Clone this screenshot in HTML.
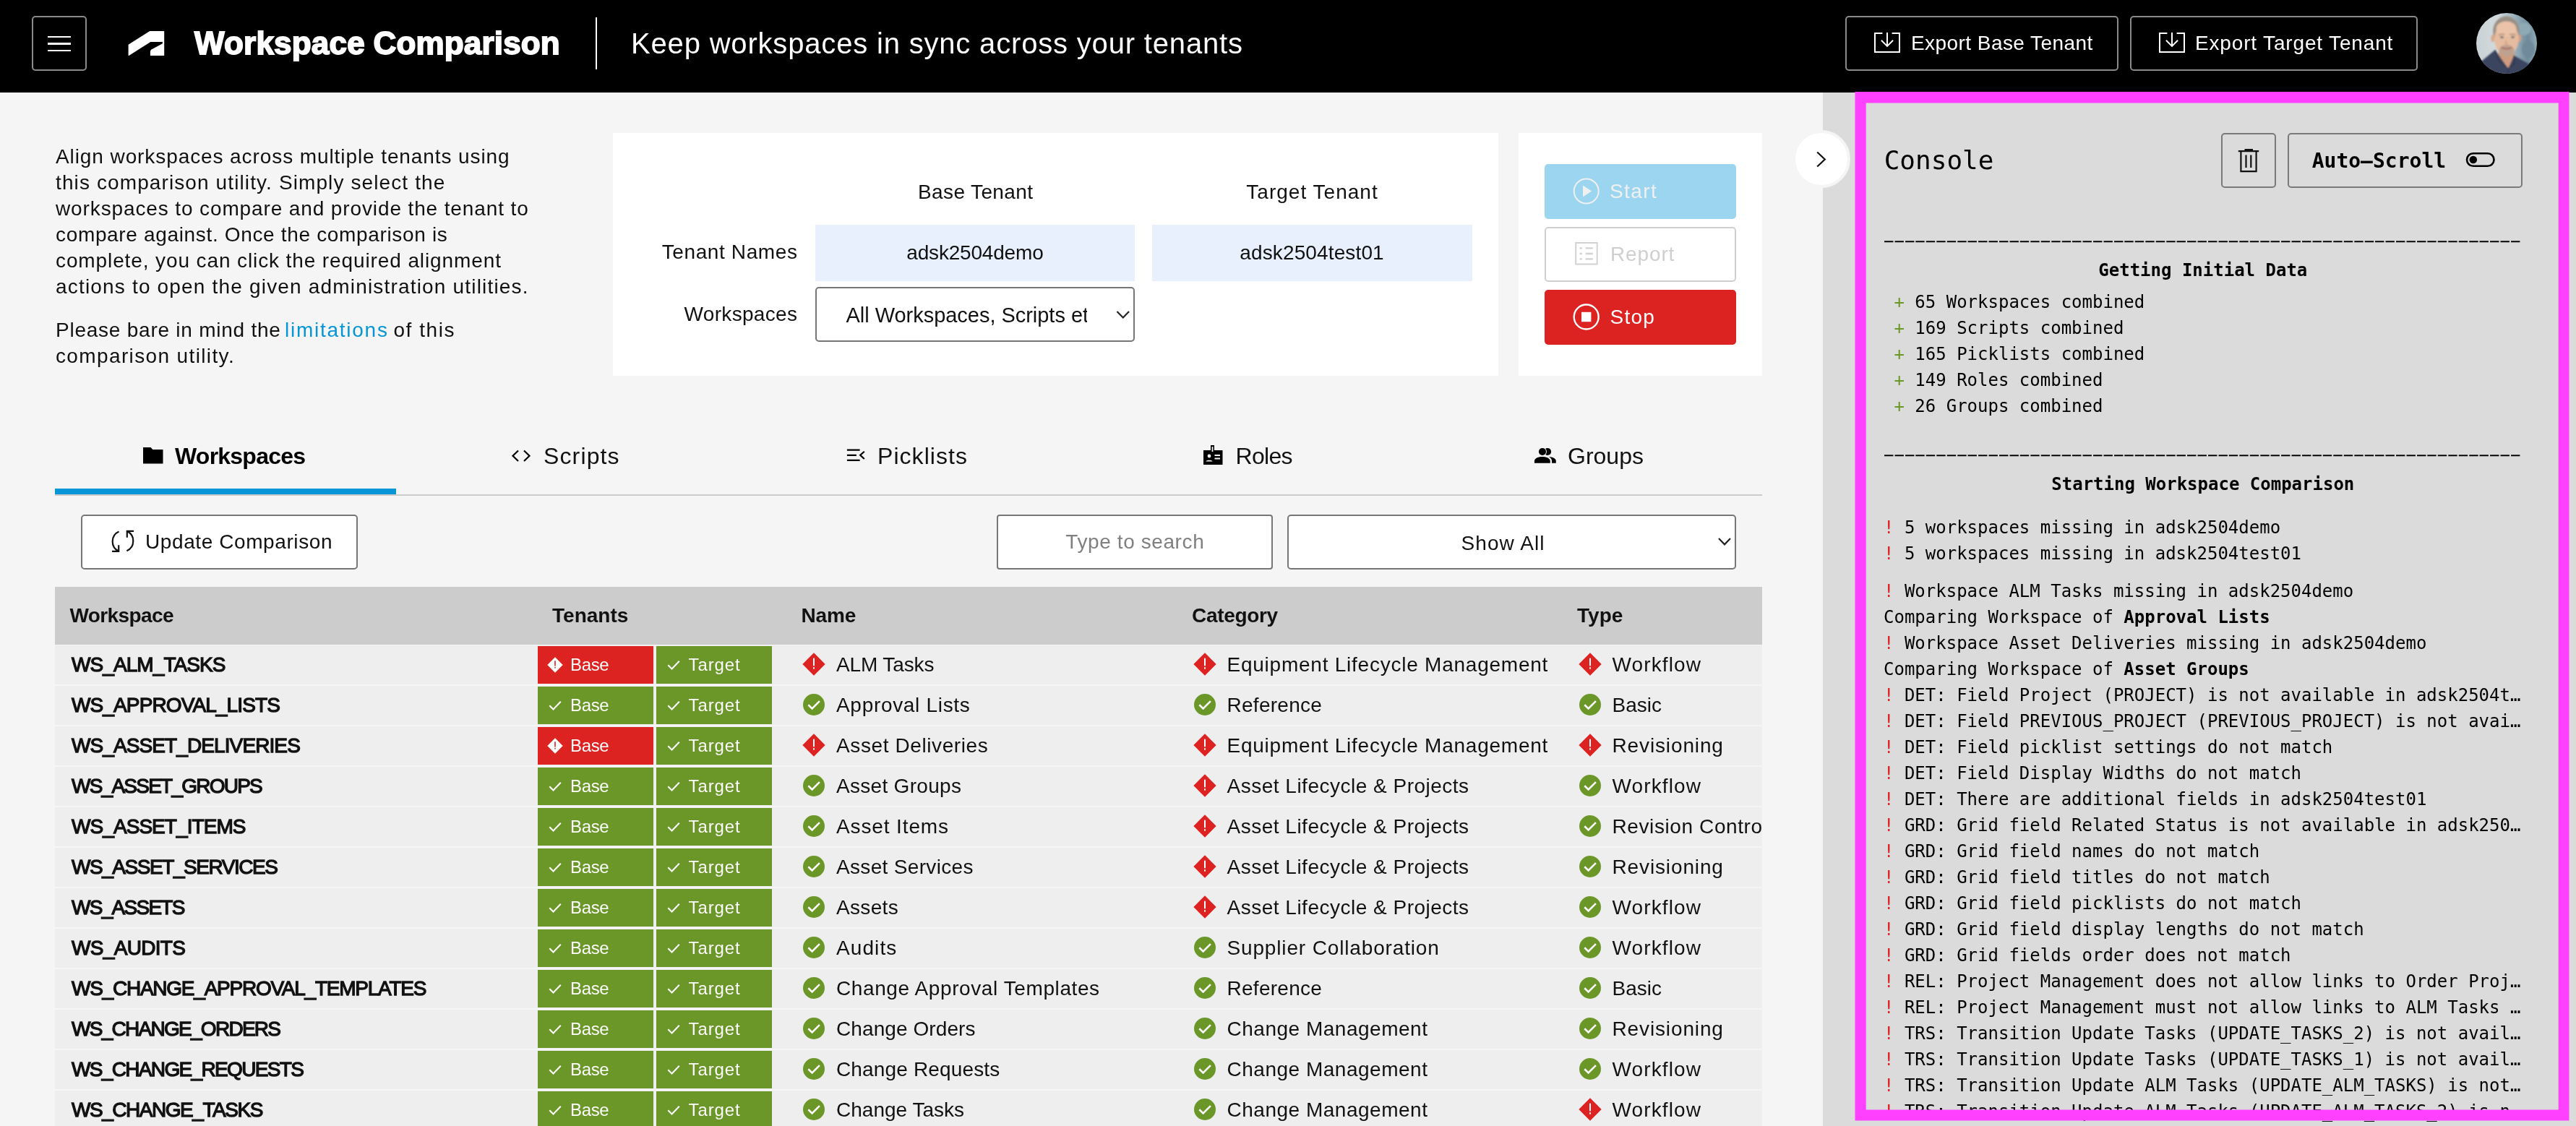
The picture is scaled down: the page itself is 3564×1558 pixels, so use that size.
<!DOCTYPE html>
<html lang="en"><head><meta charset="utf-8"><title>Workspace Comparison</title>
<style>
html,body{margin:0;padding:0;}
body{width:3564px;height:1558px;overflow:hidden;background:#f5f5f5;font-family:"Liberation Sans", sans-serif;position:relative;will-change:transform;}
.b{position:absolute;box-sizing:border-box;display:block;}
.t{position:absolute;white-space:pre;letter-spacing:0.6px;}
.m{font-family:"DejaVu Sans Mono", "Liberation Mono", monospace;letter-spacing:0;}
</style></head><body>
<div class="b" style="left:0px;top:0px;width:3564px;height:128px;background:#000;"></div>
<div class="b" style="left:44px;top:22px;width:76px;height:76px;border:2px solid #8a8a8a;border-radius:5px;"></div>
<div class="b" style="left:66px;top:49.5px;width:32px;height:2.5px;background:#fff;"></div>
<div class="b" style="left:66px;top:59px;width:32px;height:2.5px;background:#fff;"></div>
<div class="b" style="left:66px;top:68.5px;width:32px;height:2.5px;background:#fff;"></div>
<svg class="b" style="left:170px;top:36px;" width="64" height="48" viewBox="0 0 64 48"><polygon fill="#fff" points="7.6,25.7 37.2,6.9 57.2,6.9 57.2,40.9 37.9,40.9 37.9,35.1 39,32.7 54.9,24.3 54.9,22 38.3,22 8.3,40.9 7.6,40.9"/></svg>
<div class="t" style="left:269px;top:31.25px;font-size:44px;line-height:57px;color:#fff;font-weight:bold;letter-spacing:0.22px;-webkit-text-stroke:1.8px #fff;">Workspace</div>
<div class="t" style="left:516.5px;top:31.25px;font-size:44px;line-height:57px;color:#fff;font-weight:bold;letter-spacing:0.17px;-webkit-text-stroke:1.8px #fff;">Comparison</div>
<div class="b" style="left:823.5px;top:24px;width:2px;height:72px;background:#fff;"></div>
<div class="t" style="left:873px;top:34.14px;font-size:40px;line-height:52px;color:#fff;letter-spacing:0.82px;">Keep workspaces in sync across your tenants</div>
<div class="b" style="left:2553px;top:22px;width:378px;height:76px;border:2px solid #8a8a8a;border-radius:5px;"></div>
<svg class="b" style="left:2592px;top:44px;" width="38" height="30" viewBox="0 0 38 30"><path d="M12.4 2H2v26h34V2H25.6" fill="none" stroke="#fff" stroke-width="2"/><path d="M19 1v18.5M10.9 11.8l8.1 8.1 8.1-8.1" fill="none" stroke="#fff" stroke-width="2"/></svg>
<div class="t" style="left:2644px;top:42.30px;font-size:28px;line-height:36px;color:#fff;letter-spacing:0.44px;">Export Base Tenant</div>
<div class="b" style="left:2947px;top:22px;width:398px;height:76px;border:2px solid #8a8a8a;border-radius:5px;"></div>
<svg class="b" style="left:2986px;top:44px;" width="38" height="30" viewBox="0 0 38 30"><path d="M12.4 2H2v26h34V2H25.6" fill="none" stroke="#fff" stroke-width="2"/><path d="M19 1v18.5M10.9 11.8l8.1 8.1 8.1-8.1" fill="none" stroke="#fff" stroke-width="2"/></svg>
<div class="t" style="left:3037px;top:42.30px;font-size:28px;line-height:36px;color:#fff;letter-spacing:0.84px;">Export Target Tenant</div>
<svg class="b" style="left:3426px;top:18px;" width="84" height="84" viewBox="0 0 84 84"><defs><clipPath id="avc"><circle cx="42" cy="42" r="42"/></clipPath><linearGradient id="avg" x1="0" x2="1" y1="0" y2="0"><stop offset="0" stop-color="#c9d2d6"/><stop offset=".35" stop-color="#d3dadd"/><stop offset=".62" stop-color="#9db3bd"/><stop offset=".85" stop-color="#6f8b9c"/><stop offset="1" stop-color="#94abb6"/></linearGradient><filter id="avb" x="-10%" y="-10%" width="120%" height="120%"><feGaussianBlur stdDeviation="1.1"/></filter></defs><g clip-path="url(#avc)"><rect width="84" height="84" fill="url(#avg)"/><g filter="url(#avb)"><ellipse cx="72" cy="50" rx="9" ry="12" fill="#6f8a9b"/><ellipse cx="66" cy="22" rx="10" ry="9" fill="#8eaab4"/><ellipse cx="41.500" cy="25" rx="18.300" ry="20.500" fill="#9a8f86"/><ellipse cx="23" cy="35" rx="2.600" ry="5" fill="#d9a88c"/><ellipse cx="60" cy="35" rx="2.600" ry="5" fill="#d19f84"/><path d="M34 50h17l3 12-10 18-16-20z" fill="#cf9c80"/><ellipse cx="42" cy="36" rx="16.800" ry="22.500" fill="#e6bca0"/><ellipse cx="41.500" cy="22" rx="14" ry="10.500" fill="#eac3a8"/><ellipse cx="42" cy="52" rx="10.500" ry="8" fill="#bfa190"/><path d="M34.500 47.500q7.500 5.500 15 0q-7.500 3-15 0z" fill="#f2e6e0" stroke="#a8675c" stroke-width="1.200"/><ellipse cx="35.500" cy="33.500" rx="2.600" ry="1.300" fill="#5d6068"/><ellipse cx="50.500" cy="33.500" rx="2.600" ry="1.300" fill="#5d6068"/><path d="M31 30.500q4.500-2 8.500-.5M46 30q4-1.500 8.500.5" stroke="#9a7f6c" stroke-width="1.300" fill="none"/><path d="M41 36l-2.500 8.500h6z" fill="#dba98d"/><path d="M-2 74L7.800 66.300 26.100 51.100 44.200 76.900 52.200 58.800 73 70.500 90 86H-2z" fill="#3a4560"/><path d="M26.100 51.100L31 66 44.200 76.900M52.200 58.800L53 70 44.200 76.900V86" stroke="#2b3349" stroke-width="1.200" fill="none"/></g></g></svg>
<div class="t" style="left:77px;top:199.30px;font-size:28px;line-height:36px;color:#111;letter-spacing:0.91px;">Align workspaces across multiple tenants using</div>
<div class="t" style="left:77px;top:235.30px;font-size:28px;line-height:36px;color:#111;letter-spacing:1.11px;">this comparison utility. Simply select the</div>
<div class="t" style="left:77px;top:271.30px;font-size:28px;line-height:36px;color:#111;letter-spacing:0.88px;">workspaces to compare and provide the tenant to</div>
<div class="t" style="left:77px;top:307.30px;font-size:28px;line-height:36px;color:#111;letter-spacing:0.66px;">compare against. Once the comparison is</div>
<div class="t" style="left:77px;top:343.30px;font-size:28px;line-height:36px;color:#111;letter-spacing:0.89px;">complete, you can click the required alignment</div>
<div class="t" style="left:77px;top:379.30px;font-size:28px;line-height:36px;color:#111;letter-spacing:1.18px;">actions to open the given administration utilities.</div>
<div class="t" style="left:77px;top:439.30px;font-size:28px;line-height:36px;color:#111;letter-spacing:0.76px;">Please bare in mind the</div>
<div class="t" style="left:394px;top:439.30px;font-size:28px;line-height:36px;color:#0696d7;letter-spacing:1.74px;">limitations</div>
<div class="t" style="left:544.5px;top:439.30px;font-size:28px;line-height:36px;color:#111;letter-spacing:1.53px;">of this</div>
<div class="t" style="left:77px;top:475.30px;font-size:28px;line-height:36px;color:#111;letter-spacing:1.37px;">comparison utility.</div>
<div class="b" style="left:848px;top:184px;width:1225px;height:336px;background:#fff;"></div>
<div class="t" style="left:1349.5px;top:248.30px;font-size:28px;line-height:36px;color:#111;letter-spacing:0.37px;transform:translateX(-50%);margin-left:0.19px;">Base Tenant</div>
<div class="t" style="left:1815px;top:248.30px;font-size:28px;line-height:36px;color:#111;letter-spacing:1.02px;transform:translateX(-50%);margin-left:0.51px;">Target Tenant</div>
<div class="t" style="left:1103px;top:331.30px;font-size:28px;line-height:36px;color:#111;letter-spacing:0.62px;transform:translateX(-100%);margin-left:0.62px;">Tenant Names</div>
<div class="t" style="left:1103px;top:417.30px;font-size:28px;line-height:36px;color:#111;letter-spacing:0.32px;transform:translateX(-100%);margin-left:0.32px;">Workspaces</div>
<div class="b" style="left:1128px;top:311px;width:442px;height:78px;background:#e8f0fe;"></div>
<div class="b" style="left:1594px;top:311px;width:443px;height:78px;background:#e8f0fe;"></div>
<div class="t" style="left:1349px;top:332.30px;font-size:28px;line-height:36px;color:#111;letter-spacing:-0.19px;transform:translateX(-50%);margin-left:-0.09px;">adsk2504demo</div>
<div class="t" style="left:1815px;top:332.30px;font-size:28px;line-height:36px;color:#111;letter-spacing:0.13px;transform:translateX(-50%);margin-left:0.06px;">adsk2504test01</div>
<div class="b" style="left:1128px;top:397px;width:442px;height:76px;background:#fff;border:2px solid #767676;border-radius:5px;"></div>
<div class="b" style="left:1160px;top:400px;width:344px;height:70px;overflow:hidden;">
<div class="t" style="left:10.5px;top:16.55px;font-size:29px;line-height:38px;color:#111;letter-spacing:-0.03px;">All Workspaces, Scripts etc.</div>
</div>
<svg class="b" style="left:1542px;top:426px;" width="24" height="18" viewBox="0 0 24 18"><path d="M3.5 5l8.3 8.5L20 5" fill="none" stroke="#222" stroke-width="2.2"/></svg>
<div class="b" style="left:2101px;top:184px;width:337px;height:336px;background:#fff;"></div>
<div class="b" style="left:2137px;top:227px;width:265px;height:76px;background:#9bd5ef;border-radius:5px;"></div>
<svg class="b" style="left:2175px;top:245px;" width="40" height="40" viewBox="0 0 40 40"><circle cx="19.7" cy="19.5" r="17" fill="none" stroke="#f0f0f0" stroke-width="2"/><path d="M15 11.5v16l12-8z" fill="#f0f0f0"/></svg>
<div class="t" style="left:2227px;top:247.30px;font-size:28px;line-height:36px;color:#f0f0f0;letter-spacing:1.44px;">Start</div>
<div class="b" style="left:2137px;top:314px;width:265px;height:76px;background:#fff;border:2px solid #cfcfcf;border-radius:5px;"></div>
<svg class="b" style="left:2177px;top:334px;" width="36" height="36" viewBox="0 0 36 36"><rect x="3.200" y="2" width="29.500" height="29.500" fill="none" stroke="#d2d2d2" stroke-width="2"/><path d="M8.600 9.400h3.200M8.600 17h3.200M8.600 24.400h3.200M16.600 9.400h10.200M16.600 17h10.200M16.600 24.400h10.200" stroke="#d2d2d2" stroke-width="2.400" fill="none"/></svg>
<div class="t" style="left:2228px;top:334.30px;font-size:28px;line-height:36px;color:#cfcfcf;letter-spacing:0.87px;">Report</div>
<div class="b" style="left:2137px;top:401px;width:265px;height:76px;background:#dd2222;border-radius:5px;"></div>
<svg class="b" style="left:2175px;top:419px;" width="40" height="40" viewBox="0 0 40 40"><circle cx="19.7" cy="19.5" r="17" fill="none" stroke="#fff" stroke-width="2.4"/><rect x="13" y="12.8" width="13.4" height="13.4" fill="#fff"/></svg>
<div class="t" style="left:2227.5px;top:421.30px;font-size:28px;line-height:36px;color:#fff;letter-spacing:1.26px;">Stop</div>
<div class="b" style="left:76px;top:683.5px;width:2362px;height:2px;background:#cbcbcb;"></div>
<div class="b" style="left:76px;top:676px;width:472px;height:8px;background:#0696d7;"></div>
<svg class="b" style="left:196px;top:617px;" width="32" height="26" viewBox="0 0 32 26"><path d="M2 2h10.5l2.8 3H29.5v19.5H2z" fill="#000"/></svg>
<div class="t" style="left:242px;top:609.91px;font-size:32px;line-height:42px;color:#000;font-weight:bold;letter-spacing:-0.77px;">Workspaces</div>
<svg class="b" style="left:706px;top:620px;" width="32" height="22" viewBox="0 0 32 22"><path d="M11 3.5L3.5 10.7 11 18M19 3.5l7.5 7.2L19 18" fill="none" stroke="#000" stroke-width="2.2"/></svg>
<div class="t" style="left:752px;top:609.91px;font-size:32px;line-height:42px;color:#111;letter-spacing:1.13px;">Scripts</div>
<svg class="b" style="left:1168px;top:618px;" width="32" height="24" viewBox="0 0 32 24"><path d="M3.9 4.7h17.7M3.9 11.8h13M3.9 18.8h17.7M27.8 6.8l-5.6 5 5.6 5.2" fill="none" stroke="#000" stroke-width="2.2"/></svg>
<div class="t" style="left:1214px;top:609.91px;font-size:32px;line-height:42px;color:#111;letter-spacing:1.05px;">Picklists</div>
<svg class="b" style="left:1662.7px;top:614.3px;" width="32" height="30" viewBox="0 0 32 30"><path d="M12 2h5v7h11.5v20H2V9h10z" fill="#000"/><rect x="13.6" y="4" width="1.8" height="7" fill="#f5f5f5"/><circle cx="10" cy="17" r="2.4" fill="#f5f5f5"/><path d="M5.5 24.5c0-2.5 9-2.5 9 0z" fill="#f5f5f5"/><path d="M17.5 16h7.5M17.5 20.5h7.5" stroke="#f5f5f5" stroke-width="1.8"/></svg>
<div class="t" style="left:1709.5px;top:609.91px;font-size:32px;line-height:42px;color:#111;letter-spacing:-0.68px;">Roles</div>
<svg class="b" style="left:2121px;top:618px;" width="34" height="26" viewBox="0 0 34 26"><circle cx="20.100" cy="6.920" r="5.030" fill="#000"/><circle cx="12.970" cy="6.920" r="6" fill="#f5f5f5"/><circle cx="12.970" cy="6.920" r="5.030" fill="#000"/><path d="M1.930 22.640V19.800C1.930 15.500 8 13.900 12.800 13.900S23.730 15.500 23.730 19.800V22.640z" fill="#000"/><path d="M21.840 13.900C27 14.200 31.770 16 31.770 19.800V22.640H26.040V19.800C26.040 17 24.300 15.200 21.840 13.900z" fill="#000"/></svg>
<div class="t" style="left:2169px;top:609.91px;font-size:32px;line-height:42px;color:#111;letter-spacing:0.01px;">Groups</div>
<div class="b" style="left:112px;top:712px;width:383px;height:76px;background:#fff;border:2px solid #767676;border-radius:5px;"></div>
<svg class="b" style="left:150px;top:730px;" width="40" height="40" viewBox="0 0 40 40"><path d="M14.5 5.500A15 15 0 0 0 14.200 32.700M5 32.900H14.200V24.200M25.800 5.100A15 15 0 0 1 25.400 32.300M35 4.800H25.800V13.700" fill="none" stroke="#111" stroke-width="2.200"/></svg>
<div class="t" style="left:201px;top:731.60px;font-size:28px;line-height:36px;color:#111;letter-spacing:0.59px;">Update Comparison</div>
<div class="b" style="left:1379px;top:712px;width:382px;height:76px;background:#fff;border:2px solid #767676;border-radius:4px;"></div>
<div class="t" style="left:1570px;top:732.30px;font-size:28px;line-height:36px;color:#808080;letter-spacing:0.60px;transform:translateX(-50%);margin-left:0.30px;">Type to search</div>
<div class="b" style="left:1781px;top:712px;width:621px;height:76px;background:#fff;border:2px solid #767676;border-radius:5px;"></div>
<div class="t" style="left:2079px;top:734.30px;font-size:28px;line-height:36px;color:#111;letter-spacing:1.06px;transform:translateX(-50%);margin-left:0.53px;">Show All</div>
<svg class="b" style="left:2374px;top:740px;" width="24" height="18" viewBox="0 0 24 18"><path d="M4 5l8 8.300 8-8.300" fill="none" stroke="#222" stroke-width="2.2"/></svg>
<div class="b" style="left:76px;top:812px;width:2362px;height:80px;background:#ccc;"></div>
<div class="t" style="left:96.5px;top:834.30px;font-size:28px;line-height:36px;color:#111;font-weight:bold;letter-spacing:-0.60px;">Workspace</div>
<div class="t" style="left:764px;top:834.30px;font-size:28px;line-height:36px;color:#111;font-weight:bold;letter-spacing:0.02px;">Tenants</div>
<div class="t" style="left:1108.5px;top:834.30px;font-size:28px;line-height:36px;color:#111;font-weight:bold;letter-spacing:-0.12px;">Name</div>
<div class="t" style="left:1649px;top:834.30px;font-size:28px;line-height:36px;color:#111;font-weight:bold;letter-spacing:-0.31px;">Category</div>
<div class="t" style="left:2182px;top:834.30px;font-size:28px;line-height:36px;color:#111;font-weight:bold;letter-spacing:0.04px;">Type</div>
<div class="b" style="left:76px;top:892px;width:2362px;height:666px;overflow:hidden;">
<div class="b" style="left:0px;top:1px;width:2362px;height:54px;background:#eee;"></div>
<div class="t" style="left:23px;top:9.60px;font-size:28px;line-height:36px;color:#111;letter-spacing:-0.92px;-webkit-text-stroke:1.3px #111;">WS_ALM_TASKS</div>
<div class="b" style="left:668px;top:2px;width:160px;height:52px;background:#dd2222;"></div>
<svg class="b" style="left:675.3px;top:11px;" width="34" height="34" viewBox="0 0 34 34"><path d="M17 6.300000000000001L27.7 17 17 27.7 6.300000000000001 17z" fill="#fff"/><rect x="16.20" y="11.34" width="1.60" height="7.22" fill="#dd2222"/><rect x="16.20" y="19.86" width="1.60" height="1.64" fill="#dd2222"/></svg>
<div class="t" style="left:713px;top:11.88px;font-size:24px;line-height:31px;color:#fff;letter-spacing:-0.33px;">Base</div>
<div class="b" style="left:832px;top:2px;width:160px;height:52px;background:#6a9728;"></div>
<svg class="b" style="left:846px;top:20px;" width="20" height="16" viewBox="0 0 20 16"><path d="M2.300 8.300l5.200 5.200 10.300-10.800" fill="none" stroke="#fff" stroke-width="2"/></svg>
<div class="t" style="left:876.5px;top:11.88px;font-size:24px;line-height:31px;color:#fff;letter-spacing:0.90px;">Target</div>
<svg class="b" style="left:1033px;top:9.700000000000045px;" width="34" height="34" viewBox="0 0 34 34"><path d="M17 1.3000000000000007L32.7 17 17 32.7 1.3000000000000007 17z" fill="#dd2222"/><rect x="16.00" y="8.70" width="2.00" height="10.60" fill="#fff"/><rect x="16.00" y="21.20" width="2.00" height="2.40" fill="#fff"/></svg>
<div class="t" style="left:1081px;top:9.90px;font-size:28px;line-height:36px;color:#111;letter-spacing:-0.12px;">ALM Tasks</div>
<svg class="b" style="left:1574px;top:9.700000000000045px;" width="34" height="34" viewBox="0 0 34 34"><path d="M17 1.3000000000000007L32.7 17 17 32.7 1.3000000000000007 17z" fill="#dd2222"/><rect x="16.00" y="8.70" width="2.00" height="10.60" fill="#fff"/><rect x="16.00" y="21.20" width="2.00" height="2.40" fill="#fff"/></svg>
<div class="t" style="left:1621.5px;top:9.90px;font-size:28px;line-height:36px;color:#111;letter-spacing:0.76px;">Equipment Lifecycle Management</div>
<svg class="b" style="left:2106.5px;top:9.700000000000045px;" width="34" height="34" viewBox="0 0 34 34"><path d="M17 1.3000000000000007L32.7 17 17 32.7 1.3000000000000007 17z" fill="#dd2222"/><rect x="16.00" y="8.70" width="2.00" height="10.60" fill="#fff"/><rect x="16.00" y="21.20" width="2.00" height="2.40" fill="#fff"/></svg>
<div class="t" style="left:2154.5px;top:9.90px;font-size:28px;line-height:36px;color:#111;letter-spacing:1.11px;">Workflow</div>
<div class="b" style="left:0px;top:57px;width:2362px;height:54px;background:#eee;"></div>
<div class="t" style="left:23px;top:65.60px;font-size:28px;line-height:36px;color:#111;letter-spacing:-0.88px;-webkit-text-stroke:1.3px #111;">WS_APPROVAL_LISTS</div>
<div class="b" style="left:668px;top:58px;width:160px;height:52px;background:#6a9728;"></div>
<svg class="b" style="left:682px;top:76px;" width="20" height="16" viewBox="0 0 20 16"><path d="M2.300 8.300l5.200 5.200 10.300-10.800" fill="none" stroke="#fff" stroke-width="2"/></svg>
<div class="t" style="left:713px;top:67.88px;font-size:24px;line-height:31px;color:#fff;letter-spacing:-0.33px;">Base</div>
<div class="b" style="left:832px;top:58px;width:160px;height:52px;background:#6a9728;"></div>
<svg class="b" style="left:846px;top:76px;" width="20" height="16" viewBox="0 0 20 16"><path d="M2.300 8.300l5.200 5.200 10.300-10.800" fill="none" stroke="#fff" stroke-width="2"/></svg>
<div class="t" style="left:876.5px;top:67.88px;font-size:24px;line-height:31px;color:#fff;letter-spacing:0.90px;">Target</div>
<svg class="b" style="left:1033px;top:65.70000000000005px;" width="34" height="34" viewBox="0 0 34 34"><circle cx="17" cy="17" r="15" fill="#6a9728"/><path d="M9.300 17.300l5.300 5.200 10.300-10.300" fill="none" stroke="#fff" stroke-width="2.600"/></svg>
<div class="t" style="left:1081px;top:65.90px;font-size:28px;line-height:36px;color:#111;letter-spacing:0.69px;">Approval Lists</div>
<svg class="b" style="left:1574px;top:65.70000000000005px;" width="34" height="34" viewBox="0 0 34 34"><circle cx="17" cy="17" r="15" fill="#6a9728"/><path d="M9.300 17.300l5.300 5.200 10.300-10.300" fill="none" stroke="#fff" stroke-width="2.600"/></svg>
<div class="t" style="left:1621.5px;top:65.90px;font-size:28px;line-height:36px;color:#111;letter-spacing:0.28px;">Reference</div>
<svg class="b" style="left:2106.5px;top:65.70000000000005px;" width="34" height="34" viewBox="0 0 34 34"><circle cx="17" cy="17" r="15" fill="#6a9728"/><path d="M9.300 17.300l5.300 5.200 10.300-10.300" fill="none" stroke="#fff" stroke-width="2.600"/></svg>
<div class="t" style="left:2154.5px;top:65.90px;font-size:28px;line-height:36px;color:#111;letter-spacing:-0.02px;">Basic</div>
<div class="b" style="left:0px;top:113px;width:2362px;height:54px;background:#eee;"></div>
<div class="t" style="left:23px;top:121.60px;font-size:28px;line-height:36px;color:#111;letter-spacing:-0.90px;-webkit-text-stroke:1.3px #111;">WS_ASSET_DELIVERIES</div>
<div class="b" style="left:668px;top:114px;width:160px;height:52px;background:#dd2222;"></div>
<svg class="b" style="left:675.3px;top:123px;" width="34" height="34" viewBox="0 0 34 34"><path d="M17 6.300000000000001L27.7 17 17 27.7 6.300000000000001 17z" fill="#fff"/><rect x="16.20" y="11.34" width="1.60" height="7.22" fill="#dd2222"/><rect x="16.20" y="19.86" width="1.60" height="1.64" fill="#dd2222"/></svg>
<div class="t" style="left:713px;top:123.88px;font-size:24px;line-height:31px;color:#fff;letter-spacing:-0.33px;">Base</div>
<div class="b" style="left:832px;top:114px;width:160px;height:52px;background:#6a9728;"></div>
<svg class="b" style="left:846px;top:132px;" width="20" height="16" viewBox="0 0 20 16"><path d="M2.300 8.300l5.200 5.200 10.300-10.800" fill="none" stroke="#fff" stroke-width="2"/></svg>
<div class="t" style="left:876.5px;top:123.88px;font-size:24px;line-height:31px;color:#fff;letter-spacing:0.90px;">Target</div>
<svg class="b" style="left:1033px;top:121.70000000000005px;" width="34" height="34" viewBox="0 0 34 34"><path d="M17 1.3000000000000007L32.7 17 17 32.7 1.3000000000000007 17z" fill="#dd2222"/><rect x="16.00" y="8.70" width="2.00" height="10.60" fill="#fff"/><rect x="16.00" y="21.20" width="2.00" height="2.40" fill="#fff"/></svg>
<div class="t" style="left:1081px;top:121.90px;font-size:28px;line-height:36px;color:#111;letter-spacing:0.60px;">Asset Deliveries</div>
<svg class="b" style="left:1574px;top:121.70000000000005px;" width="34" height="34" viewBox="0 0 34 34"><path d="M17 1.3000000000000007L32.7 17 17 32.7 1.3000000000000007 17z" fill="#dd2222"/><rect x="16.00" y="8.70" width="2.00" height="10.60" fill="#fff"/><rect x="16.00" y="21.20" width="2.00" height="2.40" fill="#fff"/></svg>
<div class="t" style="left:1621.5px;top:121.90px;font-size:28px;line-height:36px;color:#111;letter-spacing:0.76px;">Equipment Lifecycle Management</div>
<svg class="b" style="left:2106.5px;top:121.70000000000005px;" width="34" height="34" viewBox="0 0 34 34"><path d="M17 1.3000000000000007L32.7 17 17 32.7 1.3000000000000007 17z" fill="#dd2222"/><rect x="16.00" y="8.70" width="2.00" height="10.60" fill="#fff"/><rect x="16.00" y="21.20" width="2.00" height="2.40" fill="#fff"/></svg>
<div class="t" style="left:2154.5px;top:121.90px;font-size:28px;line-height:36px;color:#111;letter-spacing:0.87px;">Revisioning</div>
<div class="b" style="left:0px;top:169px;width:2362px;height:54px;background:#eee;"></div>
<div class="t" style="left:23px;top:177.60px;font-size:28px;line-height:36px;color:#111;letter-spacing:-1.76px;-webkit-text-stroke:1.3px #111;">WS_ASSET_GROUPS</div>
<div class="b" style="left:668px;top:170px;width:160px;height:52px;background:#6a9728;"></div>
<svg class="b" style="left:682px;top:188px;" width="20" height="16" viewBox="0 0 20 16"><path d="M2.300 8.300l5.200 5.200 10.300-10.800" fill="none" stroke="#fff" stroke-width="2"/></svg>
<div class="t" style="left:713px;top:179.88px;font-size:24px;line-height:31px;color:#fff;letter-spacing:-0.33px;">Base</div>
<div class="b" style="left:832px;top:170px;width:160px;height:52px;background:#6a9728;"></div>
<svg class="b" style="left:846px;top:188px;" width="20" height="16" viewBox="0 0 20 16"><path d="M2.300 8.300l5.200 5.200 10.300-10.800" fill="none" stroke="#fff" stroke-width="2"/></svg>
<div class="t" style="left:876.5px;top:179.88px;font-size:24px;line-height:31px;color:#fff;letter-spacing:0.90px;">Target</div>
<svg class="b" style="left:1033px;top:177.70000000000005px;" width="34" height="34" viewBox="0 0 34 34"><circle cx="17" cy="17" r="15" fill="#6a9728"/><path d="M9.300 17.300l5.300 5.200 10.300-10.300" fill="none" stroke="#fff" stroke-width="2.600"/></svg>
<div class="t" style="left:1081px;top:177.90px;font-size:28px;line-height:36px;color:#111;letter-spacing:0.30px;">Asset Groups</div>
<svg class="b" style="left:1574px;top:177.70000000000005px;" width="34" height="34" viewBox="0 0 34 34"><path d="M17 1.3000000000000007L32.7 17 17 32.7 1.3000000000000007 17z" fill="#dd2222"/><rect x="16.00" y="8.70" width="2.00" height="10.60" fill="#fff"/><rect x="16.00" y="21.20" width="2.00" height="2.40" fill="#fff"/></svg>
<div class="t" style="left:1621.5px;top:177.90px;font-size:28px;line-height:36px;color:#111;letter-spacing:0.50px;">Asset Lifecycle &amp; Projects</div>
<svg class="b" style="left:2106.5px;top:177.70000000000005px;" width="34" height="34" viewBox="0 0 34 34"><circle cx="17" cy="17" r="15" fill="#6a9728"/><path d="M9.300 17.300l5.300 5.200 10.300-10.300" fill="none" stroke="#fff" stroke-width="2.600"/></svg>
<div class="t" style="left:2154.5px;top:177.90px;font-size:28px;line-height:36px;color:#111;letter-spacing:1.11px;">Workflow</div>
<div class="b" style="left:0px;top:225px;width:2362px;height:54px;background:#eee;"></div>
<div class="t" style="left:23px;top:233.60px;font-size:28px;line-height:36px;color:#111;letter-spacing:-0.93px;-webkit-text-stroke:1.3px #111;">WS_ASSET_ITEMS</div>
<div class="b" style="left:668px;top:226px;width:160px;height:52px;background:#6a9728;"></div>
<svg class="b" style="left:682px;top:244px;" width="20" height="16" viewBox="0 0 20 16"><path d="M2.300 8.300l5.200 5.200 10.300-10.800" fill="none" stroke="#fff" stroke-width="2"/></svg>
<div class="t" style="left:713px;top:235.88px;font-size:24px;line-height:31px;color:#fff;letter-spacing:-0.33px;">Base</div>
<div class="b" style="left:832px;top:226px;width:160px;height:52px;background:#6a9728;"></div>
<svg class="b" style="left:846px;top:244px;" width="20" height="16" viewBox="0 0 20 16"><path d="M2.300 8.300l5.200 5.200 10.300-10.800" fill="none" stroke="#fff" stroke-width="2"/></svg>
<div class="t" style="left:876.5px;top:235.88px;font-size:24px;line-height:31px;color:#fff;letter-spacing:0.90px;">Target</div>
<svg class="b" style="left:1033px;top:233.70000000000005px;" width="34" height="34" viewBox="0 0 34 34"><circle cx="17" cy="17" r="15" fill="#6a9728"/><path d="M9.300 17.300l5.300 5.200 10.300-10.300" fill="none" stroke="#fff" stroke-width="2.600"/></svg>
<div class="t" style="left:1081px;top:233.90px;font-size:28px;line-height:36px;color:#111;letter-spacing:0.88px;">Asset Items</div>
<svg class="b" style="left:1574px;top:233.70000000000005px;" width="34" height="34" viewBox="0 0 34 34"><path d="M17 1.3000000000000007L32.7 17 17 32.7 1.3000000000000007 17z" fill="#dd2222"/><rect x="16.00" y="8.70" width="2.00" height="10.60" fill="#fff"/><rect x="16.00" y="21.20" width="2.00" height="2.40" fill="#fff"/></svg>
<div class="t" style="left:1621.5px;top:233.90px;font-size:28px;line-height:36px;color:#111;letter-spacing:0.50px;">Asset Lifecycle &amp; Projects</div>
<svg class="b" style="left:2106.5px;top:233.70000000000005px;" width="34" height="34" viewBox="0 0 34 34"><circle cx="17" cy="17" r="15" fill="#6a9728"/><path d="M9.300 17.300l5.300 5.200 10.300-10.300" fill="none" stroke="#fff" stroke-width="2.600"/></svg>
<div class="t" style="left:2154.5px;top:233.90px;font-size:28px;line-height:36px;color:#111;">Revision Control</div>
<div class="b" style="left:0px;top:281px;width:2362px;height:54px;background:#eee;"></div>
<div class="t" style="left:23px;top:289.60px;font-size:28px;line-height:36px;color:#111;letter-spacing:-1.45px;-webkit-text-stroke:1.3px #111;">WS_ASSET_SERVICES</div>
<div class="b" style="left:668px;top:282px;width:160px;height:52px;background:#6a9728;"></div>
<svg class="b" style="left:682px;top:300px;" width="20" height="16" viewBox="0 0 20 16"><path d="M2.300 8.300l5.200 5.200 10.300-10.800" fill="none" stroke="#fff" stroke-width="2"/></svg>
<div class="t" style="left:713px;top:291.88px;font-size:24px;line-height:31px;color:#fff;letter-spacing:-0.33px;">Base</div>
<div class="b" style="left:832px;top:282px;width:160px;height:52px;background:#6a9728;"></div>
<svg class="b" style="left:846px;top:300px;" width="20" height="16" viewBox="0 0 20 16"><path d="M2.300 8.300l5.200 5.200 10.300-10.800" fill="none" stroke="#fff" stroke-width="2"/></svg>
<div class="t" style="left:876.5px;top:291.88px;font-size:24px;line-height:31px;color:#fff;letter-spacing:0.90px;">Target</div>
<svg class="b" style="left:1033px;top:289.70000000000005px;" width="34" height="34" viewBox="0 0 34 34"><circle cx="17" cy="17" r="15" fill="#6a9728"/><path d="M9.300 17.300l5.300 5.200 10.300-10.300" fill="none" stroke="#fff" stroke-width="2.600"/></svg>
<div class="t" style="left:1081px;top:289.90px;font-size:28px;line-height:36px;color:#111;letter-spacing:0.33px;">Asset Services</div>
<svg class="b" style="left:1574px;top:289.70000000000005px;" width="34" height="34" viewBox="0 0 34 34"><path d="M17 1.3000000000000007L32.7 17 17 32.7 1.3000000000000007 17z" fill="#dd2222"/><rect x="16.00" y="8.70" width="2.00" height="10.60" fill="#fff"/><rect x="16.00" y="21.20" width="2.00" height="2.40" fill="#fff"/></svg>
<div class="t" style="left:1621.5px;top:289.90px;font-size:28px;line-height:36px;color:#111;letter-spacing:0.50px;">Asset Lifecycle &amp; Projects</div>
<svg class="b" style="left:2106.5px;top:289.70000000000005px;" width="34" height="34" viewBox="0 0 34 34"><circle cx="17" cy="17" r="15" fill="#6a9728"/><path d="M9.300 17.300l5.300 5.200 10.300-10.300" fill="none" stroke="#fff" stroke-width="2.600"/></svg>
<div class="t" style="left:2154.5px;top:289.90px;font-size:28px;line-height:36px;color:#111;letter-spacing:0.87px;">Revisioning</div>
<div class="b" style="left:0px;top:337px;width:2362px;height:54px;background:#eee;"></div>
<div class="t" style="left:23px;top:345.60px;font-size:28px;line-height:36px;color:#111;letter-spacing:-1.72px;-webkit-text-stroke:1.3px #111;">WS_ASSETS</div>
<div class="b" style="left:668px;top:338px;width:160px;height:52px;background:#6a9728;"></div>
<svg class="b" style="left:682px;top:356px;" width="20" height="16" viewBox="0 0 20 16"><path d="M2.300 8.300l5.200 5.200 10.300-10.800" fill="none" stroke="#fff" stroke-width="2"/></svg>
<div class="t" style="left:713px;top:347.88px;font-size:24px;line-height:31px;color:#fff;letter-spacing:-0.33px;">Base</div>
<div class="b" style="left:832px;top:338px;width:160px;height:52px;background:#6a9728;"></div>
<svg class="b" style="left:846px;top:356px;" width="20" height="16" viewBox="0 0 20 16"><path d="M2.300 8.300l5.200 5.200 10.300-10.800" fill="none" stroke="#fff" stroke-width="2"/></svg>
<div class="t" style="left:876.5px;top:347.88px;font-size:24px;line-height:31px;color:#fff;letter-spacing:0.90px;">Target</div>
<svg class="b" style="left:1033px;top:345.70000000000005px;" width="34" height="34" viewBox="0 0 34 34"><circle cx="17" cy="17" r="15" fill="#6a9728"/><path d="M9.300 17.300l5.300 5.200 10.300-10.300" fill="none" stroke="#fff" stroke-width="2.600"/></svg>
<div class="t" style="left:1081px;top:345.90px;font-size:28px;line-height:36px;color:#111;letter-spacing:0.33px;">Assets</div>
<svg class="b" style="left:1574px;top:345.70000000000005px;" width="34" height="34" viewBox="0 0 34 34"><path d="M17 1.3000000000000007L32.7 17 17 32.7 1.3000000000000007 17z" fill="#dd2222"/><rect x="16.00" y="8.70" width="2.00" height="10.60" fill="#fff"/><rect x="16.00" y="21.20" width="2.00" height="2.40" fill="#fff"/></svg>
<div class="t" style="left:1621.5px;top:345.90px;font-size:28px;line-height:36px;color:#111;letter-spacing:0.50px;">Asset Lifecycle &amp; Projects</div>
<svg class="b" style="left:2106.5px;top:345.70000000000005px;" width="34" height="34" viewBox="0 0 34 34"><circle cx="17" cy="17" r="15" fill="#6a9728"/><path d="M9.300 17.300l5.300 5.200 10.300-10.300" fill="none" stroke="#fff" stroke-width="2.600"/></svg>
<div class="t" style="left:2154.5px;top:345.90px;font-size:28px;line-height:36px;color:#111;letter-spacing:1.11px;">Workflow</div>
<div class="b" style="left:0px;top:393px;width:2362px;height:54px;background:#eee;"></div>
<div class="t" style="left:23px;top:401.60px;font-size:28px;line-height:36px;color:#111;letter-spacing:-0.68px;-webkit-text-stroke:1.3px #111;">WS_AUDITS</div>
<div class="b" style="left:668px;top:394px;width:160px;height:52px;background:#6a9728;"></div>
<svg class="b" style="left:682px;top:412px;" width="20" height="16" viewBox="0 0 20 16"><path d="M2.300 8.300l5.200 5.200 10.300-10.800" fill="none" stroke="#fff" stroke-width="2"/></svg>
<div class="t" style="left:713px;top:403.88px;font-size:24px;line-height:31px;color:#fff;letter-spacing:-0.33px;">Base</div>
<div class="b" style="left:832px;top:394px;width:160px;height:52px;background:#6a9728;"></div>
<svg class="b" style="left:846px;top:412px;" width="20" height="16" viewBox="0 0 20 16"><path d="M2.300 8.300l5.200 5.200 10.300-10.800" fill="none" stroke="#fff" stroke-width="2"/></svg>
<div class="t" style="left:876.5px;top:403.88px;font-size:24px;line-height:31px;color:#fff;letter-spacing:0.90px;">Target</div>
<svg class="b" style="left:1033px;top:401.70000000000005px;" width="34" height="34" viewBox="0 0 34 34"><circle cx="17" cy="17" r="15" fill="#6a9728"/><path d="M9.300 17.300l5.300 5.200 10.300-10.300" fill="none" stroke="#fff" stroke-width="2.600"/></svg>
<div class="t" style="left:1081px;top:401.90px;font-size:28px;line-height:36px;color:#111;letter-spacing:1.09px;">Audits</div>
<svg class="b" style="left:1574px;top:401.70000000000005px;" width="34" height="34" viewBox="0 0 34 34"><circle cx="17" cy="17" r="15" fill="#6a9728"/><path d="M9.300 17.300l5.300 5.200 10.300-10.300" fill="none" stroke="#fff" stroke-width="2.600"/></svg>
<div class="t" style="left:1621.5px;top:401.90px;font-size:28px;line-height:36px;color:#111;letter-spacing:0.85px;">Supplier Collaboration</div>
<svg class="b" style="left:2106.5px;top:401.70000000000005px;" width="34" height="34" viewBox="0 0 34 34"><circle cx="17" cy="17" r="15" fill="#6a9728"/><path d="M9.300 17.300l5.300 5.200 10.300-10.300" fill="none" stroke="#fff" stroke-width="2.600"/></svg>
<div class="t" style="left:2154.5px;top:401.90px;font-size:28px;line-height:36px;color:#111;letter-spacing:1.11px;">Workflow</div>
<div class="b" style="left:0px;top:449px;width:2362px;height:54px;background:#eee;"></div>
<div class="t" style="left:23px;top:457.60px;font-size:28px;line-height:36px;color:#111;letter-spacing:-1.24px;-webkit-text-stroke:1.3px #111;">WS_CHANGE_APPROVAL_TEMPLATES</div>
<div class="b" style="left:668px;top:450px;width:160px;height:52px;background:#6a9728;"></div>
<svg class="b" style="left:682px;top:468px;" width="20" height="16" viewBox="0 0 20 16"><path d="M2.300 8.300l5.200 5.200 10.300-10.800" fill="none" stroke="#fff" stroke-width="2"/></svg>
<div class="t" style="left:713px;top:459.88px;font-size:24px;line-height:31px;color:#fff;letter-spacing:-0.33px;">Base</div>
<div class="b" style="left:832px;top:450px;width:160px;height:52px;background:#6a9728;"></div>
<svg class="b" style="left:846px;top:468px;" width="20" height="16" viewBox="0 0 20 16"><path d="M2.300 8.300l5.200 5.200 10.300-10.800" fill="none" stroke="#fff" stroke-width="2"/></svg>
<div class="t" style="left:876.5px;top:459.88px;font-size:24px;line-height:31px;color:#fff;letter-spacing:0.90px;">Target</div>
<svg class="b" style="left:1033px;top:457.70000000000005px;" width="34" height="34" viewBox="0 0 34 34"><circle cx="17" cy="17" r="15" fill="#6a9728"/><path d="M9.300 17.300l5.300 5.200 10.300-10.300" fill="none" stroke="#fff" stroke-width="2.600"/></svg>
<div class="t" style="left:1081px;top:457.90px;font-size:28px;line-height:36px;color:#111;letter-spacing:0.60px;">Change Approval Templates</div>
<svg class="b" style="left:1574px;top:457.70000000000005px;" width="34" height="34" viewBox="0 0 34 34"><circle cx="17" cy="17" r="15" fill="#6a9728"/><path d="M9.300 17.300l5.300 5.200 10.300-10.300" fill="none" stroke="#fff" stroke-width="2.600"/></svg>
<div class="t" style="left:1621.5px;top:457.90px;font-size:28px;line-height:36px;color:#111;letter-spacing:0.28px;">Reference</div>
<svg class="b" style="left:2106.5px;top:457.70000000000005px;" width="34" height="34" viewBox="0 0 34 34"><circle cx="17" cy="17" r="15" fill="#6a9728"/><path d="M9.300 17.300l5.300 5.200 10.300-10.300" fill="none" stroke="#fff" stroke-width="2.600"/></svg>
<div class="t" style="left:2154.5px;top:457.90px;font-size:28px;line-height:36px;color:#111;letter-spacing:-0.02px;">Basic</div>
<div class="b" style="left:0px;top:505px;width:2362px;height:54px;background:#eee;"></div>
<div class="t" style="left:23px;top:513.60px;font-size:28px;line-height:36px;color:#111;letter-spacing:-1.72px;-webkit-text-stroke:1.3px #111;">WS_CHANGE_ORDERS</div>
<div class="b" style="left:668px;top:506px;width:160px;height:52px;background:#6a9728;"></div>
<svg class="b" style="left:682px;top:524px;" width="20" height="16" viewBox="0 0 20 16"><path d="M2.300 8.300l5.200 5.200 10.300-10.800" fill="none" stroke="#fff" stroke-width="2"/></svg>
<div class="t" style="left:713px;top:515.88px;font-size:24px;line-height:31px;color:#fff;letter-spacing:-0.33px;">Base</div>
<div class="b" style="left:832px;top:506px;width:160px;height:52px;background:#6a9728;"></div>
<svg class="b" style="left:846px;top:524px;" width="20" height="16" viewBox="0 0 20 16"><path d="M2.300 8.300l5.200 5.200 10.300-10.800" fill="none" stroke="#fff" stroke-width="2"/></svg>
<div class="t" style="left:876.5px;top:515.88px;font-size:24px;line-height:31px;color:#fff;letter-spacing:0.90px;">Target</div>
<svg class="b" style="left:1033px;top:513.7px;" width="34" height="34" viewBox="0 0 34 34"><circle cx="17" cy="17" r="15" fill="#6a9728"/><path d="M9.300 17.300l5.300 5.200 10.300-10.300" fill="none" stroke="#fff" stroke-width="2.600"/></svg>
<div class="t" style="left:1081px;top:513.90px;font-size:28px;line-height:36px;color:#111;letter-spacing:0.09px;">Change Orders</div>
<svg class="b" style="left:1574px;top:513.7px;" width="34" height="34" viewBox="0 0 34 34"><circle cx="17" cy="17" r="15" fill="#6a9728"/><path d="M9.300 17.300l5.300 5.200 10.300-10.300" fill="none" stroke="#fff" stroke-width="2.600"/></svg>
<div class="t" style="left:1621.5px;top:513.90px;font-size:28px;line-height:36px;color:#111;letter-spacing:0.51px;">Change Management</div>
<svg class="b" style="left:2106.5px;top:513.7px;" width="34" height="34" viewBox="0 0 34 34"><circle cx="17" cy="17" r="15" fill="#6a9728"/><path d="M9.300 17.300l5.300 5.200 10.300-10.300" fill="none" stroke="#fff" stroke-width="2.600"/></svg>
<div class="t" style="left:2154.5px;top:513.90px;font-size:28px;line-height:36px;color:#111;letter-spacing:0.87px;">Revisioning</div>
<div class="b" style="left:0px;top:561px;width:2362px;height:54px;background:#eee;"></div>
<div class="t" style="left:23px;top:569.60px;font-size:28px;line-height:36px;color:#111;letter-spacing:-1.66px;-webkit-text-stroke:1.3px #111;">WS_CHANGE_REQUESTS</div>
<div class="b" style="left:668px;top:562px;width:160px;height:52px;background:#6a9728;"></div>
<svg class="b" style="left:682px;top:580px;" width="20" height="16" viewBox="0 0 20 16"><path d="M2.300 8.300l5.200 5.200 10.300-10.800" fill="none" stroke="#fff" stroke-width="2"/></svg>
<div class="t" style="left:713px;top:571.88px;font-size:24px;line-height:31px;color:#fff;letter-spacing:-0.33px;">Base</div>
<div class="b" style="left:832px;top:562px;width:160px;height:52px;background:#6a9728;"></div>
<svg class="b" style="left:846px;top:580px;" width="20" height="16" viewBox="0 0 20 16"><path d="M2.300 8.300l5.200 5.200 10.300-10.800" fill="none" stroke="#fff" stroke-width="2"/></svg>
<div class="t" style="left:876.5px;top:571.88px;font-size:24px;line-height:31px;color:#fff;letter-spacing:0.90px;">Target</div>
<svg class="b" style="left:1033px;top:569.7px;" width="34" height="34" viewBox="0 0 34 34"><circle cx="17" cy="17" r="15" fill="#6a9728"/><path d="M9.300 17.300l5.300 5.200 10.300-10.300" fill="none" stroke="#fff" stroke-width="2.600"/></svg>
<div class="t" style="left:1081px;top:569.90px;font-size:28px;line-height:36px;color:#111;letter-spacing:0.15px;">Change Requests</div>
<svg class="b" style="left:1574px;top:569.7px;" width="34" height="34" viewBox="0 0 34 34"><circle cx="17" cy="17" r="15" fill="#6a9728"/><path d="M9.300 17.300l5.300 5.200 10.300-10.300" fill="none" stroke="#fff" stroke-width="2.600"/></svg>
<div class="t" style="left:1621.5px;top:569.90px;font-size:28px;line-height:36px;color:#111;letter-spacing:0.51px;">Change Management</div>
<svg class="b" style="left:2106.5px;top:569.7px;" width="34" height="34" viewBox="0 0 34 34"><circle cx="17" cy="17" r="15" fill="#6a9728"/><path d="M9.300 17.300l5.300 5.200 10.300-10.300" fill="none" stroke="#fff" stroke-width="2.600"/></svg>
<div class="t" style="left:2154.5px;top:569.90px;font-size:28px;line-height:36px;color:#111;letter-spacing:1.11px;">Workflow</div>
<div class="b" style="left:0px;top:617px;width:2362px;height:54px;background:#eee;"></div>
<div class="t" style="left:23px;top:625.60px;font-size:28px;line-height:36px;color:#111;letter-spacing:-1.46px;-webkit-text-stroke:1.3px #111;">WS_CHANGE_TASKS</div>
<div class="b" style="left:668px;top:618px;width:160px;height:52px;background:#6a9728;"></div>
<svg class="b" style="left:682px;top:636px;" width="20" height="16" viewBox="0 0 20 16"><path d="M2.300 8.300l5.200 5.200 10.300-10.800" fill="none" stroke="#fff" stroke-width="2"/></svg>
<div class="t" style="left:713px;top:627.88px;font-size:24px;line-height:31px;color:#fff;letter-spacing:-0.33px;">Base</div>
<div class="b" style="left:832px;top:618px;width:160px;height:52px;background:#6a9728;"></div>
<svg class="b" style="left:846px;top:636px;" width="20" height="16" viewBox="0 0 20 16"><path d="M2.300 8.300l5.200 5.200 10.300-10.800" fill="none" stroke="#fff" stroke-width="2"/></svg>
<div class="t" style="left:876.5px;top:627.88px;font-size:24px;line-height:31px;color:#fff;letter-spacing:0.90px;">Target</div>
<svg class="b" style="left:1033px;top:625.7px;" width="34" height="34" viewBox="0 0 34 34"><circle cx="17" cy="17" r="15" fill="#6a9728"/><path d="M9.300 17.300l5.300 5.200 10.300-10.300" fill="none" stroke="#fff" stroke-width="2.600"/></svg>
<div class="t" style="left:1081px;top:625.90px;font-size:28px;line-height:36px;color:#111;letter-spacing:0.01px;">Change Tasks</div>
<svg class="b" style="left:1574px;top:625.7px;" width="34" height="34" viewBox="0 0 34 34"><circle cx="17" cy="17" r="15" fill="#6a9728"/><path d="M9.300 17.300l5.300 5.200 10.300-10.300" fill="none" stroke="#fff" stroke-width="2.600"/></svg>
<div class="t" style="left:1621.5px;top:625.90px;font-size:28px;line-height:36px;color:#111;letter-spacing:0.51px;">Change Management</div>
<svg class="b" style="left:2106.5px;top:625.7px;" width="34" height="34" viewBox="0 0 34 34"><path d="M17 1.3000000000000007L32.7 17 17 32.7 1.3000000000000007 17z" fill="#dd2222"/><rect x="16.00" y="8.70" width="2.00" height="10.60" fill="#fff"/><rect x="16.00" y="21.20" width="2.00" height="2.40" fill="#fff"/></svg>
<div class="t" style="left:2154.5px;top:625.90px;font-size:28px;line-height:36px;color:#111;letter-spacing:1.11px;">Workflow</div>
</div>
<div class="b" style="left:2522px;top:128px;width:1042px;height:1430px;background:#dbdbdb;"></div>
<div class="b" style="left:2480px;top:180px;width:80px;height:80px;background:#fff;border:4px solid #f5f5f5;border-radius:50%;"></div>
<svg class="b" style="left:2508px;top:206px;" width="24" height="28" viewBox="0 0 24 28"><path d="M6.2 4.500l10.600 10-10.600 10" fill="none" stroke="#111" stroke-width="2.200"/></svg>
<div class="t m" style="left:2606.7px;top:197.64px;font-size:36px;line-height:47px;color:#000;">Console</div>
<div class="b" style="left:3073px;top:184px;width:76px;height:76px;border:2px solid #7a7a7a;border-radius:5px;"></div>
<svg class="b" style="left:3093px;top:203px;" width="36" height="40" viewBox="0 0 36 40"><path d="M3.800 6.200h28.400M7.400 6.200V34.100h21.200V6.200M14.500 11.500v17.500M21.300 11.500v17.500" fill="none" stroke="#111" stroke-width="2.200"/><path d="M12.500 4.300h11.500" stroke="#111" stroke-width="2.600"/></svg>
<div class="b" style="left:3165px;top:184px;width:325px;height:76px;border:2px solid #7a7a7a;border-radius:5px;"></div>
<div class="t m" style="left:3198.7px;top:204.71px;font-size:28px;line-height:36px;color:#000;font-weight:bold;">Auto–Scroll</div>
<svg class="b" style="left:3408px;top:207px;" width="48" height="28" viewBox="0 0 48 28"><rect x="5" y="5.200" width="37.500" height="17.600" rx="8.800" fill="none" stroke="#000" stroke-width="2.600"/><circle cx="13.800" cy="14" r="5.300" fill="#000"/></svg>
<div class="t m" style="left:2606px;top:319.00px;font-size:24px;line-height:31px;color:#000;">−−−−−−−−−−−−−−−−−−−−−−−−−−−−−−−−−−−−−−−−−−−−−−−−−−−−−−−−−−−−−</div>
<div class="t m" style="left:3047.5px;top:359.20px;font-size:24px;line-height:31px;color:#000;font-weight:bold;transform:translateX(-50%);margin-left:0.30px;">Getting Initial Data</div>
<div class="t m" style="left:2620.45px;top:403.20px;font-size:24px;line-height:31px;color:#000;"><span style="color:#6a9728">+</span> 65 Workspaces combined</div>
<div class="t m" style="left:2620.45px;top:439.20px;font-size:24px;line-height:31px;color:#000;"><span style="color:#6a9728">+</span> 169 Scripts combined</div>
<div class="t m" style="left:2620.45px;top:475.20px;font-size:24px;line-height:31px;color:#000;"><span style="color:#6a9728">+</span> 165 Picklists combined</div>
<div class="t m" style="left:2620.45px;top:511.20px;font-size:24px;line-height:31px;color:#000;"><span style="color:#6a9728">+</span> 149 Roles combined</div>
<div class="t m" style="left:2620.45px;top:547.20px;font-size:24px;line-height:31px;color:#000;"><span style="color:#6a9728">+</span> 26 Groups combined</div>
<div class="t m" style="left:2606px;top:615.20px;font-size:24px;line-height:31px;color:#000;">−−−−−−−−−−−−−−−−−−−−−−−−−−−−−−−−−−−−−−−−−−−−−−−−−−−−−−−−−−−−−</div>
<div class="t m" style="left:3047.5px;top:655.20px;font-size:24px;line-height:31px;color:#000;font-weight:bold;transform:translateX(-50%);margin-left:0.30px;">Starting Workspace Comparison</div>
<div class="t m" style="left:2606px;top:715.20px;font-size:24px;line-height:31px;color:#000;"><span style="color:#dd2222">!</span> 5 workspaces missing in adsk2504demo</div>
<div class="t m" style="left:2606px;top:751.20px;font-size:24px;line-height:31px;color:#000;"><span style="color:#dd2222">!</span> 5 workspaces missing in adsk2504test01</div>
<div class="t m" style="left:2606px;top:803.20px;font-size:24px;line-height:31px;color:#000;"><span style="color:#dd2222">!</span> Workspace ALM Tasks missing in adsk2504demo</div>
<div class="t m" style="left:2606px;top:839.20px;font-size:24px;line-height:31px;color:#000;">Comparing Workspace of <b>Approval Lists</b></div>
<div class="t m" style="left:2606px;top:875.20px;font-size:24px;line-height:31px;color:#000;"><span style="color:#dd2222">!</span> Workspace Asset Deliveries missing in adsk2504demo</div>
<div class="t m" style="left:2606px;top:911.20px;font-size:24px;line-height:31px;color:#000;">Comparing Workspace of <b>Asset Groups</b></div>
<div class="t m" style="left:2606px;top:947.20px;font-size:24px;line-height:31px;color:#000;"><span style="color:#dd2222">!</span> DET: Field Project (PROJECT) is not available in adsk2504t…</div>
<div class="t m" style="left:2606px;top:983.20px;font-size:24px;line-height:31px;color:#000;"><span style="color:#dd2222">!</span> DET: Field PREVIOUS_PROJECT (PREVIOUS_PROJECT) is not avai…</div>
<div class="t m" style="left:2606px;top:1019.20px;font-size:24px;line-height:31px;color:#000;"><span style="color:#dd2222">!</span> DET: Field picklist settings do not match</div>
<div class="t m" style="left:2606px;top:1055.20px;font-size:24px;line-height:31px;color:#000;"><span style="color:#dd2222">!</span> DET: Field Display Widths do not match</div>
<div class="t m" style="left:2606px;top:1091.20px;font-size:24px;line-height:31px;color:#000;"><span style="color:#dd2222">!</span> DET: There are additional fields in adsk2504test01</div>
<div class="t m" style="left:2606px;top:1127.20px;font-size:24px;line-height:31px;color:#000;"><span style="color:#dd2222">!</span> GRD: Grid field Related Status is not available in adsk250…</div>
<div class="t m" style="left:2606px;top:1163.20px;font-size:24px;line-height:31px;color:#000;"><span style="color:#dd2222">!</span> GRD: Grid field names do not match</div>
<div class="t m" style="left:2606px;top:1199.20px;font-size:24px;line-height:31px;color:#000;"><span style="color:#dd2222">!</span> GRD: Grid field titles do not match</div>
<div class="t m" style="left:2606px;top:1235.20px;font-size:24px;line-height:31px;color:#000;"><span style="color:#dd2222">!</span> GRD: Grid field picklists do not match</div>
<div class="t m" style="left:2606px;top:1271.20px;font-size:24px;line-height:31px;color:#000;"><span style="color:#dd2222">!</span> GRD: Grid field display lengths do not match</div>
<div class="t m" style="left:2606px;top:1307.20px;font-size:24px;line-height:31px;color:#000;"><span style="color:#dd2222">!</span> GRD: Grid fields order does not match</div>
<div class="t m" style="left:2606px;top:1343.20px;font-size:24px;line-height:31px;color:#000;"><span style="color:#dd2222">!</span> REL: Project Management does not allow links to Order Proj…</div>
<div class="t m" style="left:2606px;top:1379.20px;font-size:24px;line-height:31px;color:#000;"><span style="color:#dd2222">!</span> REL: Project Management must not allow links to ALM Tasks …</div>
<div class="t m" style="left:2606px;top:1415.20px;font-size:24px;line-height:31px;color:#000;"><span style="color:#dd2222">!</span> TRS: Transition Update Tasks (UPDATE_TASKS_2) is not avail…</div>
<div class="t m" style="left:2606px;top:1451.20px;font-size:24px;line-height:31px;color:#000;"><span style="color:#dd2222">!</span> TRS: Transition Update Tasks (UPDATE_TASKS_1) is not avail…</div>
<div class="t m" style="left:2606px;top:1487.20px;font-size:24px;line-height:31px;color:#000;"><span style="color:#dd2222">!</span> TRS: Transition Update ALM Tasks (UPDATE_ALM_TASKS) is not…</div>
<div class="t m" style="left:2606px;top:1523.20px;font-size:24px;line-height:31px;color:#000;"><span style="color:#dd2222">!</span> TRS: Transition Update ALM Tasks (UPDATE_ALM_TASKS_2) is n…</div>
<svg class="b" style="left:2560px;top:120px;" width="1004" height="1438" viewBox="0 0 1004 1438"><path fill-rule="evenodd" fill="#ff40ff" d="M6.500 7H994.500V1430.400H6.500zM21.700 22.600V1415.500H979.700V22.600z"/></svg>
</body></html>
